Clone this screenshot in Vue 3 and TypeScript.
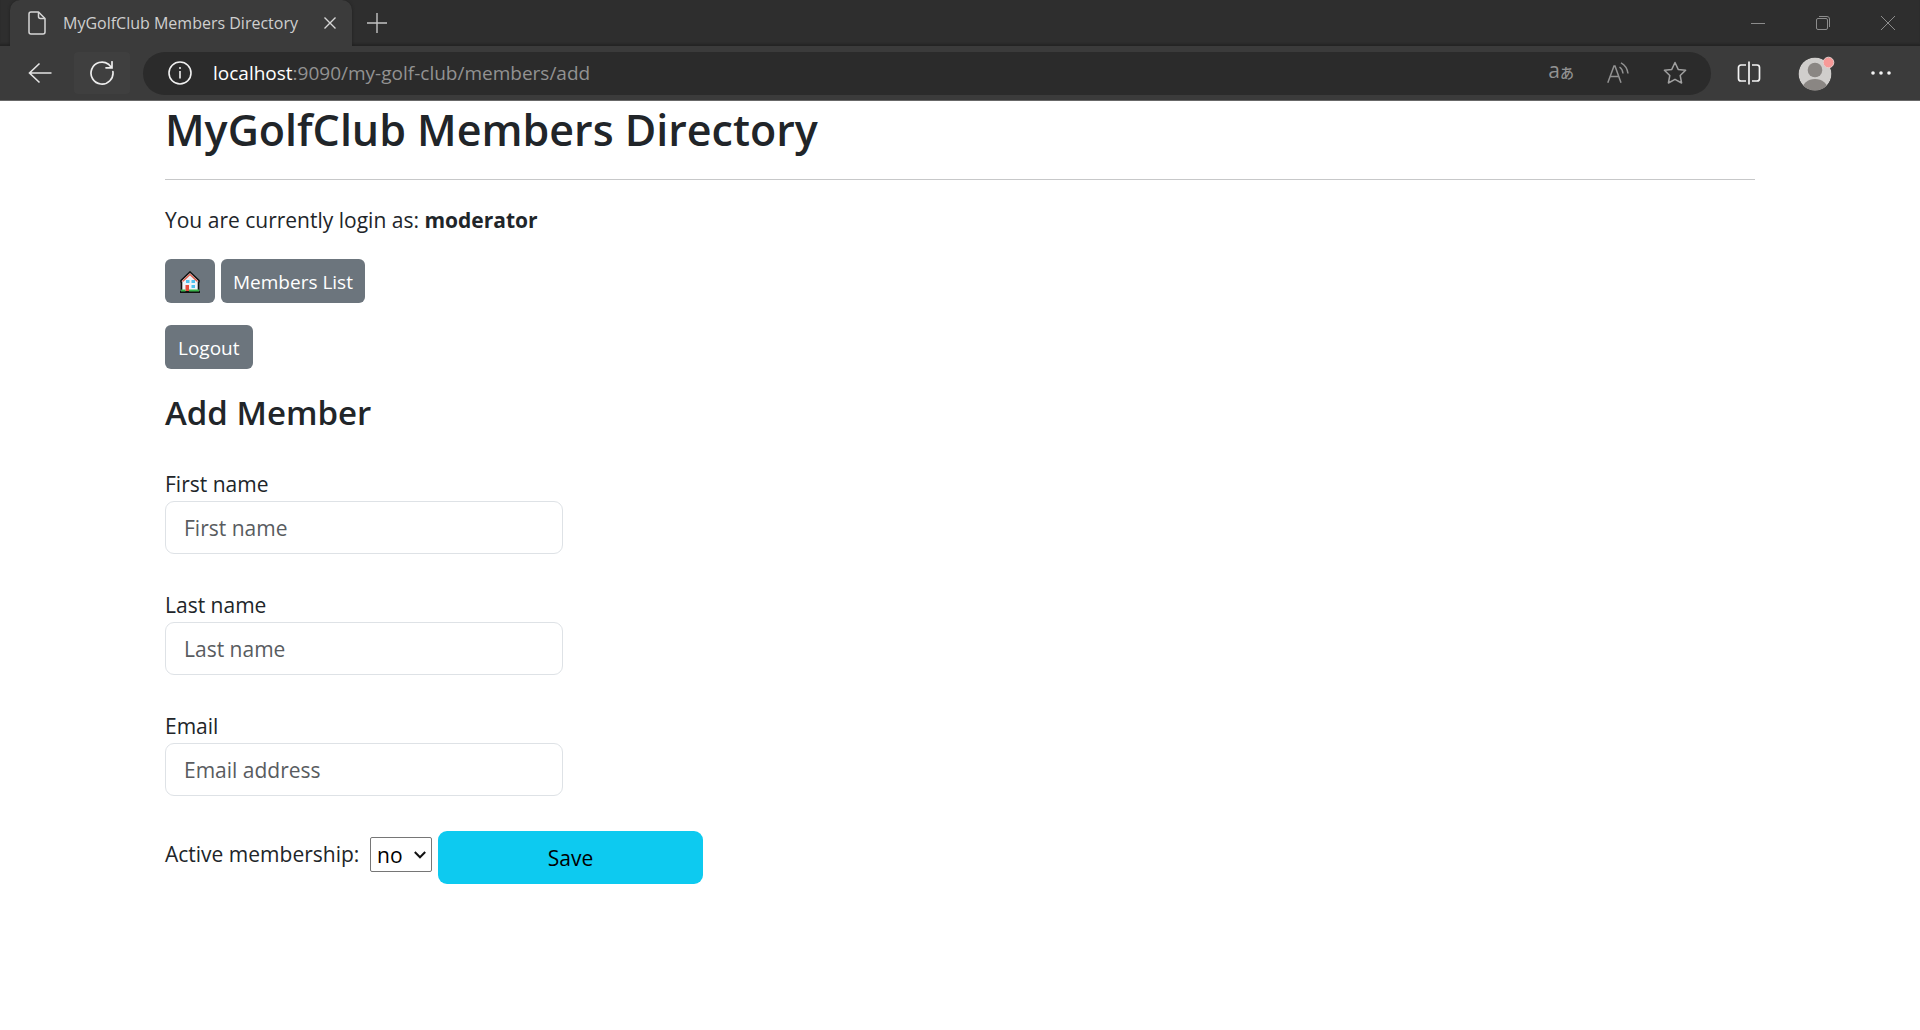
<script setup lang="ts">
import { ref } from 'vue'

interface Field {
  id: string
  label: string
  placeholder: string
  type: string
}

const title = 'MyGolfClub Members Directory'
const user = 'moderator'
const fields: Field[] = [
  { id: 'firstName', label: 'First name', placeholder: 'First name', type: 'text' },
  { id: 'lastName', label: 'Last name', placeholder: 'Last name', type: 'text' },
  { id: 'email', label: 'Email', placeholder: 'Email address', type: 'email' },
]
const values = ref<Record<string, string>>({ firstName: '', lastName: '', email: '' })
const active = ref('no')
</script>

<template>
  <div class="browser">
    <header class="chrome">
      <div class="tab-strip">
        <div class="tab">
          <svg class="tab-page" width="18" height="24" viewBox="0 0 18 24" fill="none" stroke="#d6d6d6" stroke-width="1.5" stroke-linejoin="round">
            <path d="M3 1h7.500L17 7.500V21a2 2 0 0 1-2 2H3a2 2 0 0 1-2-2V3a2 2 0 0 1 2-2z" />
            <path d="M10.500 1v4.500a2 2 0 0 0 2 2H17" />
          </svg>
          <span class="tab-title">{{ title }}</span>
          <button class="icon-button tab-close" aria-label="Close tab">
            <svg width="12" height="12" viewBox="0 0 12 12" stroke="#d6d6d6" stroke-width="1.400"><path d="M.5.5l11 11M11.500.5l-11 11" /></svg>
          </button>
        </div>
        <button class="icon-button new-tab" aria-label="New tab">
          <svg width="20" height="20" viewBox="0 0 20 20" stroke="#c4c4c4" stroke-width="1.400"><path d="M10 0v20M0 10h20" /></svg>
        </button>
        <div class="window-controls">
          <button class="icon-button" aria-label="Minimize">
            <svg width="14" height="14" viewBox="0 0 14 14" stroke="#8c8c8c"><path d="M0 7.500h14" /></svg>
          </button>
          <button class="icon-button" aria-label="Restore">
            <svg width="14" height="14" viewBox="0 0 14 14" fill="none" stroke="#8c8c8c"><rect x=".5" y="2.500" width="11" height="11" rx="1.500" /><path d="M3 .5h8a2.500 2.500 0 0 1 2.500 2.500v8" /></svg>
          </button>
          <button class="icon-button" aria-label="Close window">
            <svg width="14" height="14" viewBox="0 0 14 14" stroke="#8c8c8c"><path d="M0 0l14 14M14 0L0 14" /></svg>
          </button>
        </div>
      </div>

      <div class="toolbar">
        <button class="icon-button back" aria-label="Back">
          <svg width="24" height="22" viewBox="0 0 24 22" fill="none" stroke="#e4e4e4" stroke-width="1.600"><path d="M23.500 11H1.500M11.500 1.500L1.500 11l10 9.500" /></svg>
        </button>
        <button class="icon-button reload" aria-label="Reload">
          <svg width="24" height="24" viewBox="0 0 24 24" fill="none" stroke="#ececec" stroke-width="1.700" stroke-linecap="round"><path d="M22.900 10.500A11 11 0 1 1 18.500 3.200L21.500 6.500M22 .8v6h-6" /></svg>
        </button>
        <div class="address">
          <button class="icon-button" aria-label="Site information">
            <svg width="24" height="24" viewBox="0 0 24 24" fill="none" stroke="#f0f0f0" stroke-width="1.600"><circle cx="12" cy="12" r="11" /><path d="M12 10v7.500" /><circle cx="12" cy="7" r="1" fill="#f0f0f0" stroke="none" /></svg>
          </button>
          <span class="url"><span class="host">localhost</span>:9090/my-golf-club/members/add</span>
          <button class="icon-button translate" aria-label="Translate">a<span class="kana">あ</span></button>
          <button class="icon-button read" aria-label="Read aloud">
            <svg width="22" height="22" viewBox="0 0 22 22" fill="none" stroke="#929292" stroke-width="1.500"><path d="M.8 20.800L7 4h1l6 16.800M3.200 14.500h8.500" /><path d="M12.500 5q3 2 3.500 6.500M14 .8q6 3.200 7 10.700" /></svg>
          </button>
          <button class="icon-button star" aria-label="Add to favorites">
            <svg width="24" height="24" viewBox="0 0 24 24" fill="none" stroke="#a0a0a0" stroke-width="1.500" stroke-linejoin="round"><path d="M12 1.500l3.200 6.900 7.400.9-5.400 5.200 1.400 7.500L12 18.300 5.400 22l1.400-7.500L1.400 9.300l7.400-.9z" /></svg>
          </button>
        </div>
        <button class="icon-button split" aria-label="Split screen">
          <svg width="24" height="24" viewBox="0 0 24 24" fill="none" stroke="#f4f4f4" stroke-width="1.700"><path d="M9 4H4a2.500 2.500 0 0 0-2.500 2.500v11A2.500 2.500 0 0 0 4 20h5M15 4h5a2.500 2.500 0 0 1 2.500 2.500v11A2.500 2.500 0 0 1 20 20h-5M12 .5v23" /></svg>
        </button>
        <button class="icon-button profile" aria-label="Profile">
          <svg width="38" height="36" viewBox="0 0 38 36">
            <defs><clipPath id="avatar"><circle cx="17" cy="19" r="16.500" /></clipPath></defs>
            <g clip-path="url(#avatar)">
              <circle cx="17" cy="19" r="16.500" fill="#d0cecc" />
              <circle cx="17" cy="15" r="7.300" fill="#8a8683" />
              <ellipse cx="17" cy="35" rx="13" ry="11" fill="#8a8683" />
            </g>
            <circle cx="30.500" cy="7.500" r="5.300" fill="#f79a98" stroke="#e9cfce" />
          </svg>
        </button>
        <button class="icon-button more" aria-label="Settings and more">
          <svg width="20" height="4" viewBox="0 0 20 4" fill="#f4f4f4"><circle cx="2" cy="2" r="1.800" /><circle cx="10" cy="2" r="1.800" /><circle cx="18" cy="2" r="1.800" /></svg>
        </button>
      </div>
    </header>

    <main class="container">
      <h1>{{ title }}</h1>
      <hr />
      <p class="login">You are currently login as: <strong>{{ user }}</strong></p>
      <nav class="links">
        <a class="btn home" href="#home" aria-label="Home">
          <svg width="20" height="22" viewBox="0 0 20 22">
            <path d="M1 20V10.500L10 1.500l9 9V20z" fill="#eef2f8" />
            <path d="M1 11.500V9.500L10 1l9 8.500v2M1.500 11v9M18.500 11v9" fill="none" stroke="#111" stroke-width="1.600" />
            <path d="M2.500 10.500L10 3.500l7.500 7" fill="none" stroke="#e0604c" stroke-width="1.400" />
            <path d="M6 9h3.500v3H6zM11.500 9H15v3h-3.500zM11.500 14H15v3h-3.500z" fill="#4cc0ee" />
            <path d="M5.500 14h3.500v6H5.500z" fill="#e64b3c" />
            <path d="M0 21h20" stroke="#111" stroke-width="2" />
            <path d="M1 19.500h4.500M9 19.500h10" stroke="#38b449" stroke-width="2" />
          </svg>
        </a>
        <a class="btn" href="#members">Members List</a>
      </nav>
      <button class="btn logout" type="button">Logout</button>

      <h2>Add Member</h2>
      <form @submit.prevent>
        <div v-for="field in fields" :key="field.id" class="field">
          <label :for="field.id">{{ field.label }}</label>
          <input :id="field.id" v-model="values[field.id]" :type="field.type" :placeholder="field.placeholder" />
        </div>
        <div class="actions">
          <div class="membership">
            <label for="active">Active membership:</label>
            <span class="select">
              <select id="active" v-model="active">
                <option>no</option>
                <option>yes</option>
              </select>
              <svg class="chevron" width="12" height="8" viewBox="0 0 12 8" fill="none" stroke="#111" stroke-width="2"><path d="M.8 1L6 6.300 11.200 1" /></svg>
            </span>
          </div>
          <button class="save" type="submit">Save</button>
        </div>
      </form>
    </main>
  </div>
</template>

<style>
body {
  background: #fff;
}
</style>

<style scoped>
.browser,
.browser * {
  box-sizing: border-box;
}
.browser {
  font-family: "Open Sans", "Noto Sans", "Noto Sans CJK JP", sans-serif;
  font-size: 21px;
  line-height: 34px;
  color: #212529;
}
.icon-button {
  display: flex;
  align-items: center;
  justify-content: center;
  flex: none;
  padding: 0;
  border: 0;
  background: none;
  font-family: inherit;
}

/* Browser frame */
.chrome {
  background: #3b3b3b;
  border-bottom: 1px solid #686868;
}
.tab-strip {
  display: flex;
  height: 46px;
  padding-left: 10px;
  background: #2e2e2e;
  box-shadow: inset 0 -3px 2px -1px #242424;
}
.tab {
  display: flex;
  align-items: center;
  width: 342px;
  padding: 0 16px 0 18px;
  border-radius: 10px 10px 0 0;
  background: #3b3b3b;
  box-shadow: 0 0 3px #202020;
  clip-path: inset(0 -4px 0 -4px);
}
.tab-title {
  flex: 1;
  margin-left: 17px;
  font-size: 16px;
  color: #cfcfcf;
  white-space: nowrap;
}
.new-tab {
  width: 50px;
}
.window-controls {
  display: flex;
  margin-left: auto;
}
.window-controls .icon-button {
  width: 65px;
}
.toolbar {
  display: flex;
  align-items: center;
  height: 54px;
  padding: 0 29px 0 28px;
}
.back {
  width: 24px;
}
.reload {
  width: 56px;
  height: 42px;
  margin: 0 13px 0 22px;
  border-radius: 4px;
  background: #3f3f3f;
}
.address {
  display: flex;
  align-items: center;
  flex: 1;
  height: 43px;
  padding: 0 24px 0 25px;
  border-radius: 22px;
  background: #2b2b2b;
}
.url {
  flex: 1;
  margin-left: 21px;
  font-size: 19px;
  color: #929292;
}
.host {
  color: #fff;
}
.translate {
  align-items: baseline;
  line-height: 34px;
  padding-bottom: 4px;
  font-size: 21px;
  color: #929292;
}
.kana {
  font-size: 14px;
  font-weight: 500;
}
.read {
  margin: 0 34px 0 33px;
}
.split {
  margin-left: 26px;
}
.profile {
  margin: 0 35px 0 37px;
}

/* Page */
.container {
  max-width: 1590px;
  margin: 0 auto;
}
h1 {
  margin: 0 0 20px;
  font-size: 43px;
  line-height: 58px;
  font-weight: 600;
}
hr {
  margin: 0 0 23px;
  border: 0;
  border-top: 1px solid #c7c8c9;
}
.login {
  margin: 0 0 22px;
}
.links {
  display: flex;
  gap: 6px;
  margin-bottom: 22px;
}
.btn {
  display: flex;
  align-items: center;
  height: 44px;
  padding: 2px 12px 0;
  border: 0;
  border-radius: 6px;
  background: #6c757d;
  font-family: inherit;
  font-size: 19px;
  color: #fff;
  text-decoration: none;
}
.home {
  padding: 2px 15px 0;
}
.logout {
  padding: 2px 13px 0;
}
h2 {
  margin: 23px 0 34px;
  font-size: 33px;
  line-height: 42px;
  font-weight: 600;
}
form {
  display: flex;
  flex-direction: column;
  gap: 35px;
}
.field {
  width: 398px;
}
.field label {
  display: block;
  line-height: 33px;
}
.field input {
  display: block;
  width: 100%;
  height: 53px;
  padding: 0 18px;
  border: 1px solid #dee2e6;
  border-radius: 9px;
  background: #fff;
  font: inherit;
  color: #212529;
}
.field input::placeholder {
  color: #595c5f;
  opacity: 1;
}
.actions {
  display: flex;
  gap: 6px;
}
.membership {
  display: flex;
  align-items: center;
  gap: 6px;
  height: 46px;
}
.membership label {
  min-width: 199px;
}
.select {
  display: flex;
  position: relative;
}
select {
  width: 62px;
  height: 35px;
  padding: 0 0 0 6px;
  appearance: none;
  border: 1px solid #767676;
  border-radius: 2px;
  background: #fff;
  font: inherit;
  color: #000;
}
.chevron {
  position: absolute;
  top: 14px;
  right: 6px;
  pointer-events: none;
}
.save {
  width: 265px;
  height: 53px;
  padding: 0;
  border: 0;
  border-radius: 9px;
  background: #0dcaf0;
  font: inherit;
  color: #000;
}
</style>
